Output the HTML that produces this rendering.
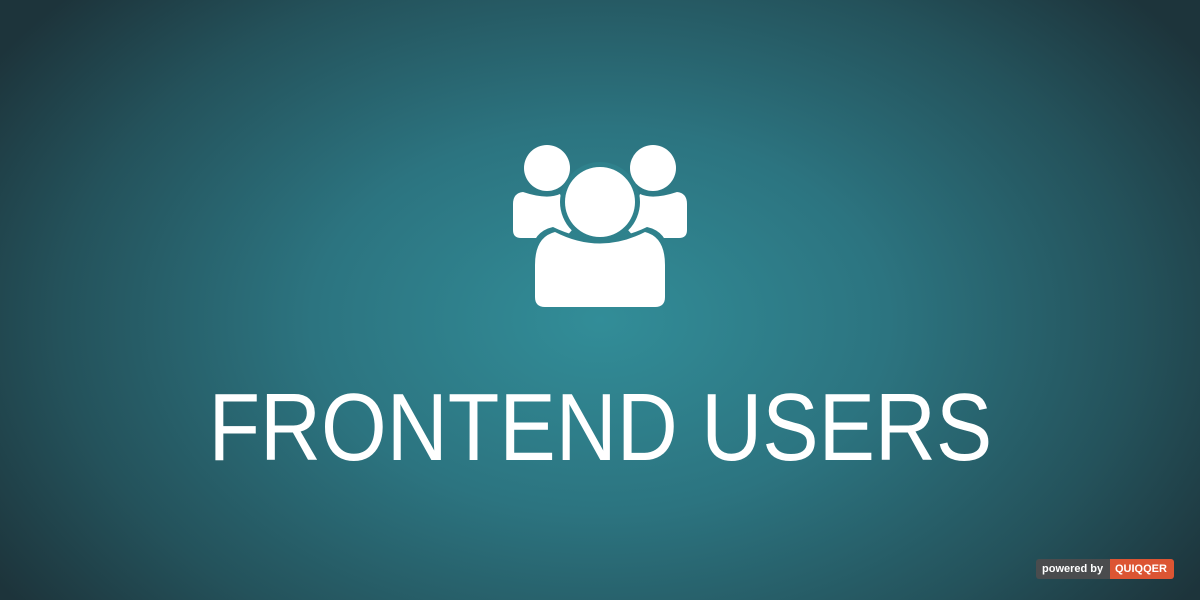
<!DOCTYPE html>
<html><head><style>
html,body{margin:0;padding:0}
body{width:1200px;height:600px;overflow:hidden;position:relative;
background:radial-gradient(ellipse 720px 480px at 600px 320px,#328d98 0%,#2c7480 40%,#24525b 75%,#1d343b 100%);
font-family:"Liberation Sans",sans-serif}
.t{position:absolute;left:0;width:1200px;top:378px;text-align:center;color:#fff;font-size:96px;line-height:100px;white-space:nowrap}
.t span{display:inline-block;transform:scaleX(0.88);font-weight:normal}
.b{position:absolute;left:1036px;top:559px;height:20px;display:flex;font-size:11px;font-weight:bold;line-height:20px;border-radius:3px;overflow:hidden}
.b1{background:#4a4c4e;color:#fff;padding:0 6px;width:62px}
.b2{background:#dc5533;color:#fff;padding:0 5px;width:54px}
</style></head><body>
<svg width="1200" height="600" style="position:absolute;left:0;top:0">
<g fill="#fff">
<circle cx="547" cy="168" r="23"/>
<circle cx="653" cy="168" r="23"/>
<path d="M523 192 Q547 200 560 194 L572 230 L565 238 L521 238 Q513 238 513 230 L513 204 Q513 193 523 192Z"/>
<path d="M677 192 Q653 200 640 194 L628 230 L635 238 L679 238 Q687 238 687 230 L687 204 Q687 193 677 192Z"/>
</g>
<g fill="#2f818c">
<circle cx="600" cy="202" r="40"/>
<path d="M553 227 Q600 250 647 227 Q670 232 670 262 L670 300 L530 300 L530 262 Q530 232 553 227Z"/>
</g>
<g fill="#fff">
<circle cx="600" cy="202" r="35"/>
<path d="M555 232 Q600 255 645 232 Q665 237 665 265 L665 297 Q665 307 655 307 L545 307 Q535 307 535 297 L535 265 Q535 237 555 232Z"/>
</g>
</svg>
<div class="t"><span>FRONTEND USERS</span></div>
<div class="b"><div class="b1">powered by</div><div class="b2">QUIQQER</div></div>
</body></html>
